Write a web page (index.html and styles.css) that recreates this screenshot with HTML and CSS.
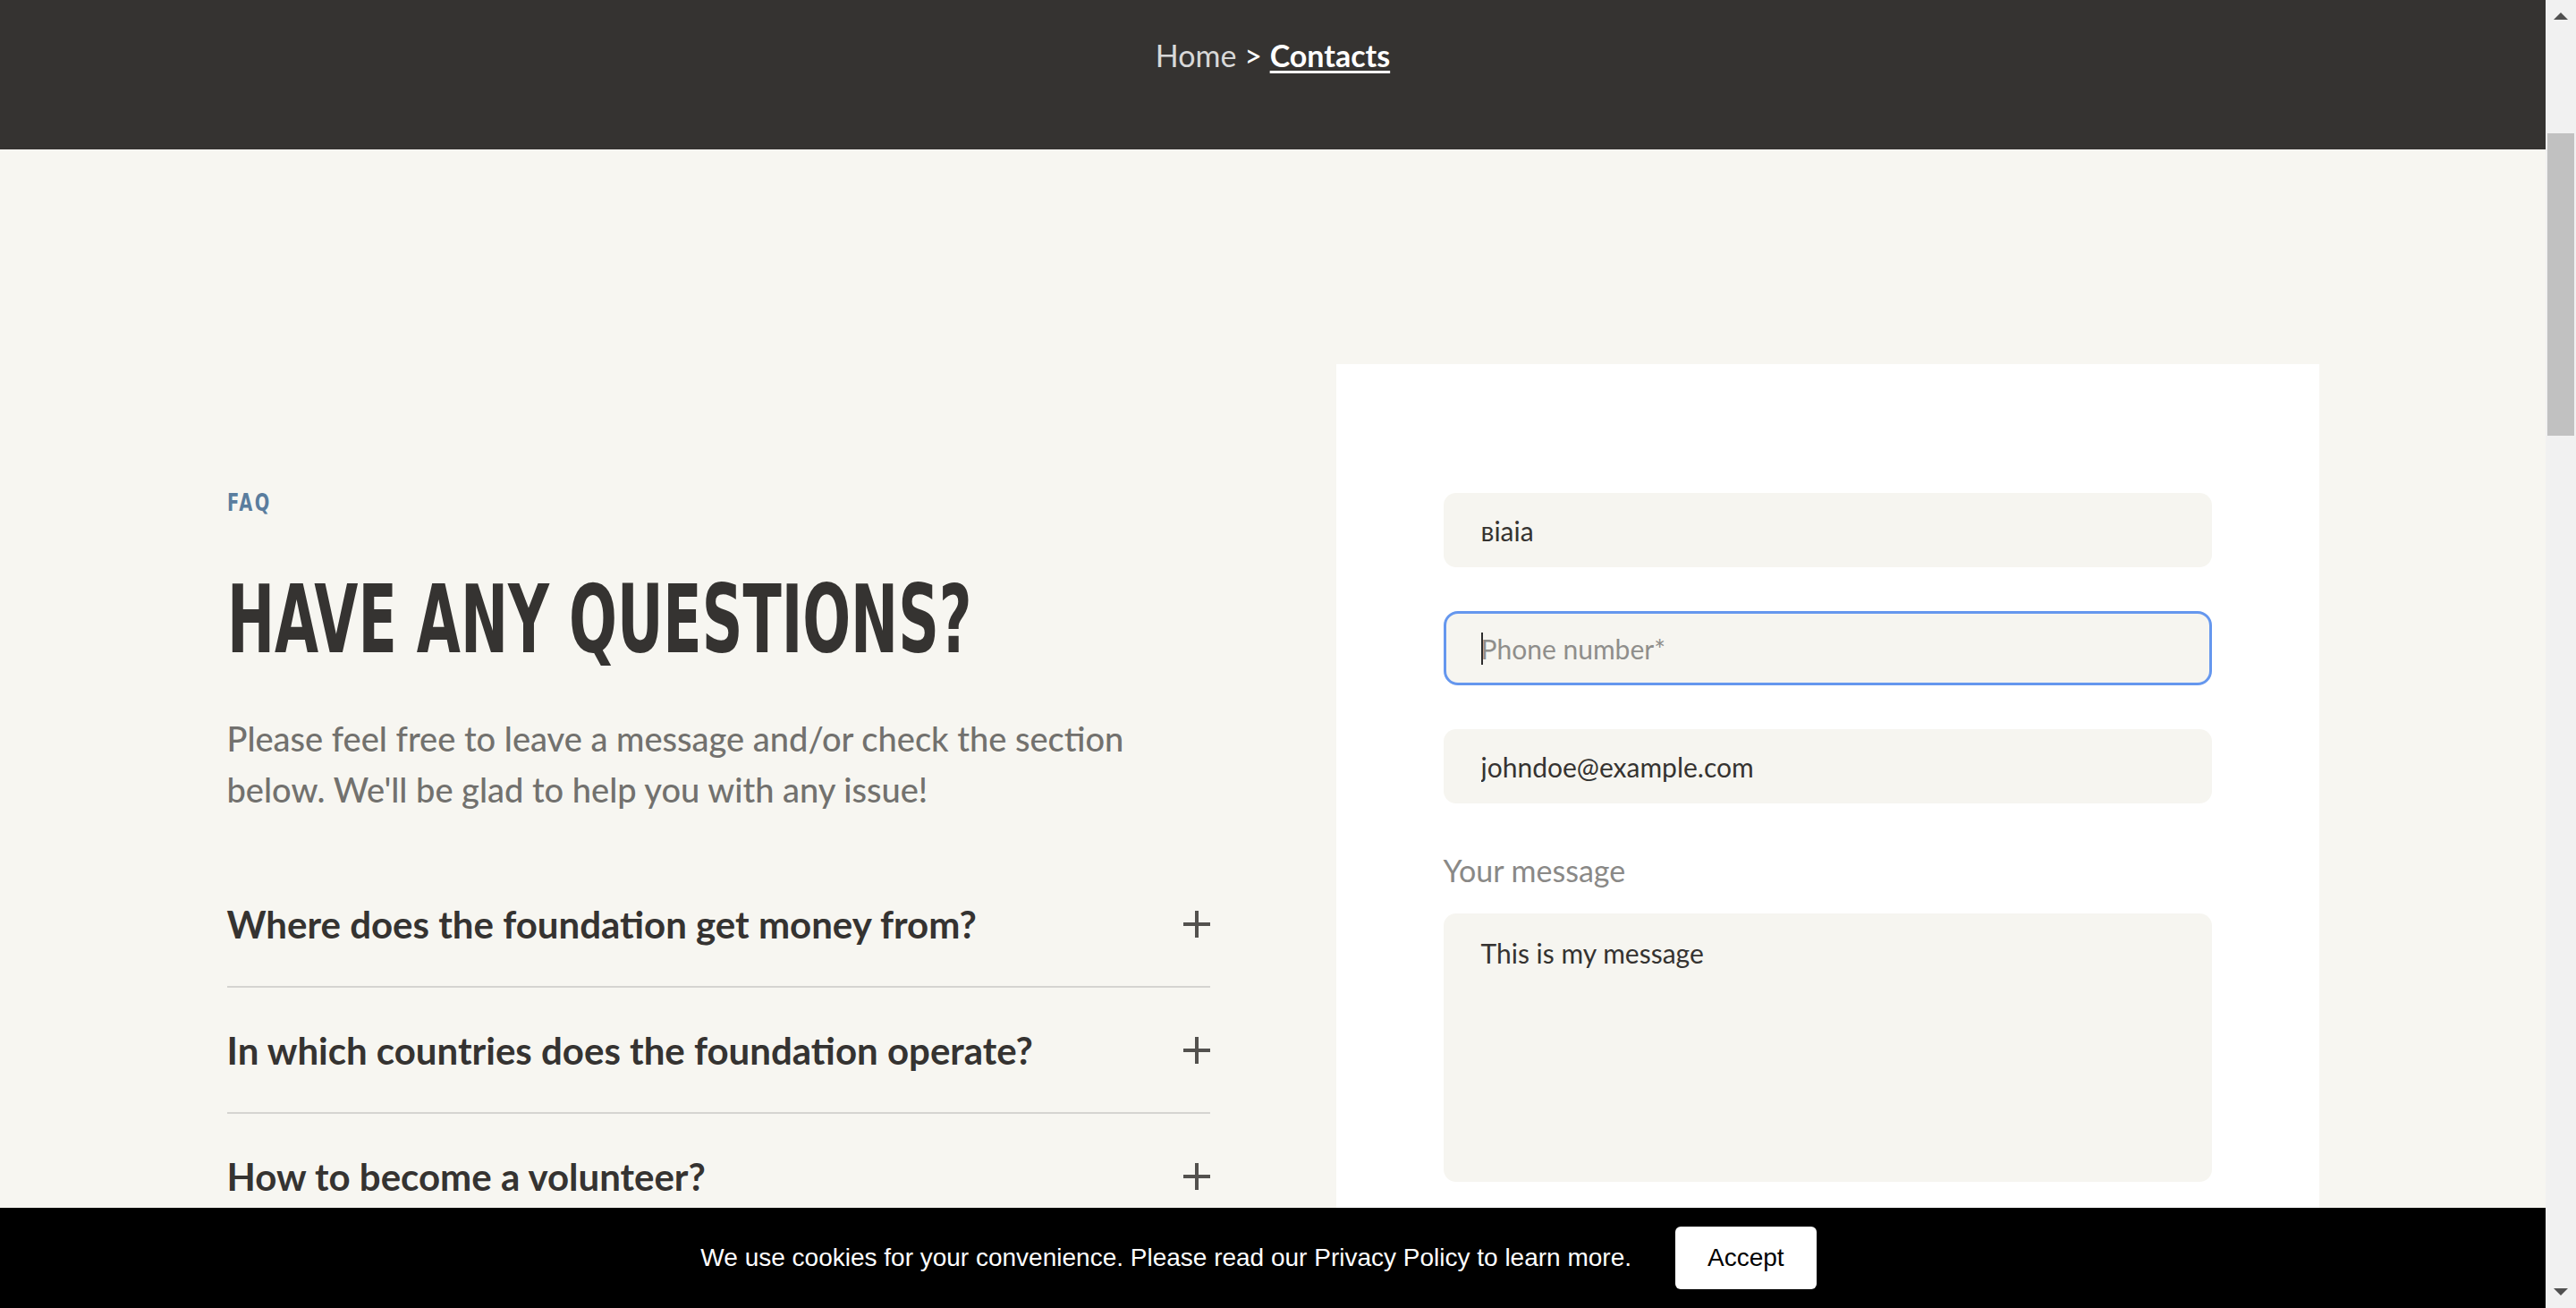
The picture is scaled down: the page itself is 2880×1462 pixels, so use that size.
FILE: index.html
```html
<!DOCTYPE html>
<html lang="en">
<head>
<meta charset="utf-8">
<title>Contacts</title>
<link rel="stylesheet" href="styles.css">
</head>
<body>
<div class="screen">
  <div class="viewport">
    <header class="hero">
      <nav class="crumbs"><span class="crumb-home">Home</span> <span class="crumb-sep">&gt;</span> <a class="crumb-current" href="#">Contacts</a></nav>
    </header>
    <main class="contact">
      <section class="faq">
        <p class="eyebrow">FAQ</p>
        <h1 class="title">HAVE ANY QUESTIONS?</h1>
        <p class="lead">Please feel free to leave a message and/or check the section below. We'll be glad to help you with any issue!</p>
        <ul class="accordion">
          <li class="acc-item"><span>Where does the foundation get money from?</span><svg class="plus" width="30" height="30" viewBox="0 0 30 30"><rect x="13" y="0" width="4" height="30" fill="#53514e"/><rect x="0" y="13" width="30" height="4" fill="#53514e"/></svg></li>
          <li class="acc-item"><span>In which countries does the foundation operate?</span><svg class="plus" width="30" height="30" viewBox="0 0 30 30"><rect x="13" y="0" width="4" height="30" fill="#53514e"/><rect x="0" y="13" width="30" height="4" fill="#53514e"/></svg></li>
          <li class="acc-item acc-last"><span>How to become a volunteer?</span><svg class="plus" width="30" height="30" viewBox="0 0 30 30"><rect x="13" y="0" width="4" height="30" fill="#53514e"/><rect x="0" y="13" width="30" height="4" fill="#53514e"/></svg></li>
        </ul>
      </section>
      <section class="card">
        <form class="form">
          <input class="input" type="text" value="вiaia" placeholder="Your name*">
          <div class="field-focus"><input class="input input-focused" type="tel" placeholder="Phone number*"></div>
          <input class="input" type="email" value="johndoe@example.com" placeholder="E-mail*">
          <label class="label">Your message</label>
          <textarea class="input textarea">This is my message</textarea>
        </form>
      </section>
    </main>
    <div class="cookie">
      <span class="cookie-text">We use cookies for your convenience. Please read our Privacy Policy to learn more.</span>
      <button class="accept" type="button">Accept</button>
    </div>
  </div>
  <div class="scrollbar">
    <span class="arrow-up"></span>
    <span class="thumb"></span>
    <span class="scroll-rest"></span>
    <span class="arrow-down"></span>
  </div>
</div>
</body>
</html>
```

FILE: styles.css
```css
html, body {
  margin: 0;
  padding: 0;
}

body {
  font-family: Lato, "Open Sans", sans-serif;
  background: #f7f6f1;
  color: #353331;
  overflow: hidden;
}

.screen {
  display: flex;
  height: 1462px;
}

.viewport {
  flex: 1;
  position: relative;
  overflow: hidden;
  background: #f7f6f1;
}

/* header */
.hero {
  height: 167px;
  box-sizing: border-box;
  padding-top: 38px;
  background: #353331;
  text-align: center;
  font-size: 34px;
  line-height: 48px;
  color: #fff;
}

.crumb-home {
  color: #d8d8d8;
}

.crumb-sep {
  color: #fff;
}

.crumb-current {
  color: #fff;
  font-weight: 700;
  text-decoration: underline;
  text-decoration-thickness: 3px;
  text-underline-offset: 4px;
}

/* main */
.contact {
  display: grid;
  grid-template-columns: 1099px 1099px;
  column-gap: 141px;
  justify-content: center;
  padding-top: 240px;
}

.faq {
  padding-top: 139px;
}

.eyebrow {
  margin: 0;
  font-family: "DejaVu Sans Condensed", "DejaVu Sans", sans-serif;
  font-stretch: condensed;
  font-weight: 700;
  font-size: 27px;
  line-height: 32px;
  letter-spacing: 3px;
  color: #5a7d9e;
  transform: scaleX(0.8);
  transform-origin: left center;
}

.title {
  margin: 62px 0 0;
  font-family: "DejaVu Sans Condensed", "DejaVu Sans", sans-serif;
  font-stretch: condensed;
  font-weight: 700;
  font-size: 106px;
  line-height: 106px;
  color: #353331;
  white-space: nowrap;
  transform: scaleX(0.665);
  transform-origin: left center;
}

.lead {
  margin: 51px 0 0;
  max-width: 1070px;
  font-size: 38px;
  font-weight: 500;
  line-height: 57px;
  color: #72716e;
}

.accordion {
  list-style: none;
  margin: 52px 0 0;
  padding: 0;
}

.acc-item {
  display: flex;
  justify-content: space-between;
  align-items: center;
  padding: 47px 0 46px;
  border-bottom: 2px solid #d5d4d1;
  font-size: 42px;
  line-height: 46px;
  font-weight: 700;
  color: #353331;
}

.acc-last {
  padding-bottom: 20px;
}

.plus {
  flex: none;
}

/* form card */
.card {
  background: #fff;
  padding: 144px 120px 120px;
}

.form {
  display: flex;
  flex-direction: column;
}

.input {
  display: block;
  width: 100%;
  box-sizing: border-box;
  height: 83px;
  margin: 0 0 49px;
  padding: 0 39px;
  border: 3px solid transparent;
  border-radius: 14px;
  background: #f6f5f0;
  font-family: Lato, "Open Sans", sans-serif;
  font-size: 30px;
  color: #353331;
  outline: none;
}

.input::placeholder {
  color: #8f8e8b;
}

.field-focus {
  position: relative;
}

.field-focus::after {
  content: "";
  position: absolute;
  left: 42px;
  top: 24px;
  width: 2px;
  height: 36px;
  background: #2d2d2d;
}

.input-focused {
  border-color: #6597ee;
  border-radius: 16px;
}

.label {
  display: block;
  margin: 3px 0 26px;
  font-size: 34px;
  line-height: 45px;
  font-weight: 400;
  color: #8a8987;
}

.textarea {
  height: 300px;
  margin-bottom: 0;
  padding: 19px 39px;
  line-height: 45px;
  resize: none;
}

/* cookie banner */
.cookie {
  position: absolute;
  left: 0;
  right: 0;
  bottom: 0;
  height: 112px;
  box-sizing: border-box;
  padding-right: 32px;
  background: #000;
  display: flex;
  align-items: center;
  justify-content: center;
  gap: 49px;
  font-family: "Liberation Sans", Arial, sans-serif;
  font-size: 28px;
  color: #fff;
}

.accept {
  height: 70px;
  padding: 0 36px;
  border: none;
  border-radius: 6px;
  background: #fff;
  color: #000;
  font-family: "Liberation Sans", Arial, sans-serif;
  font-size: 28px;
}

/* fake browser scrollbar */
.scrollbar {
  flex: none;
  width: 34px;
  background: #f1f1f1;
  display: flex;
  flex-direction: column;
  align-items: center;
  padding: 14px 0;
  box-sizing: border-box;
}

.arrow-up {
  width: 0;
  height: 0;
  border-left: 8px solid transparent;
  border-right: 8px solid transparent;
  border-bottom: 8px solid #505050;
}

.thumb {
  margin-top: 127px;
  width: 30px;
  height: 338px;
  background: #c1c1c1;
}

.scroll-rest {
  flex: 1;
}

.arrow-down {
  width: 0;
  height: 0;
  border-left: 8px solid transparent;
  border-right: 8px solid transparent;
  border-top: 8px solid #505050;
}
```
